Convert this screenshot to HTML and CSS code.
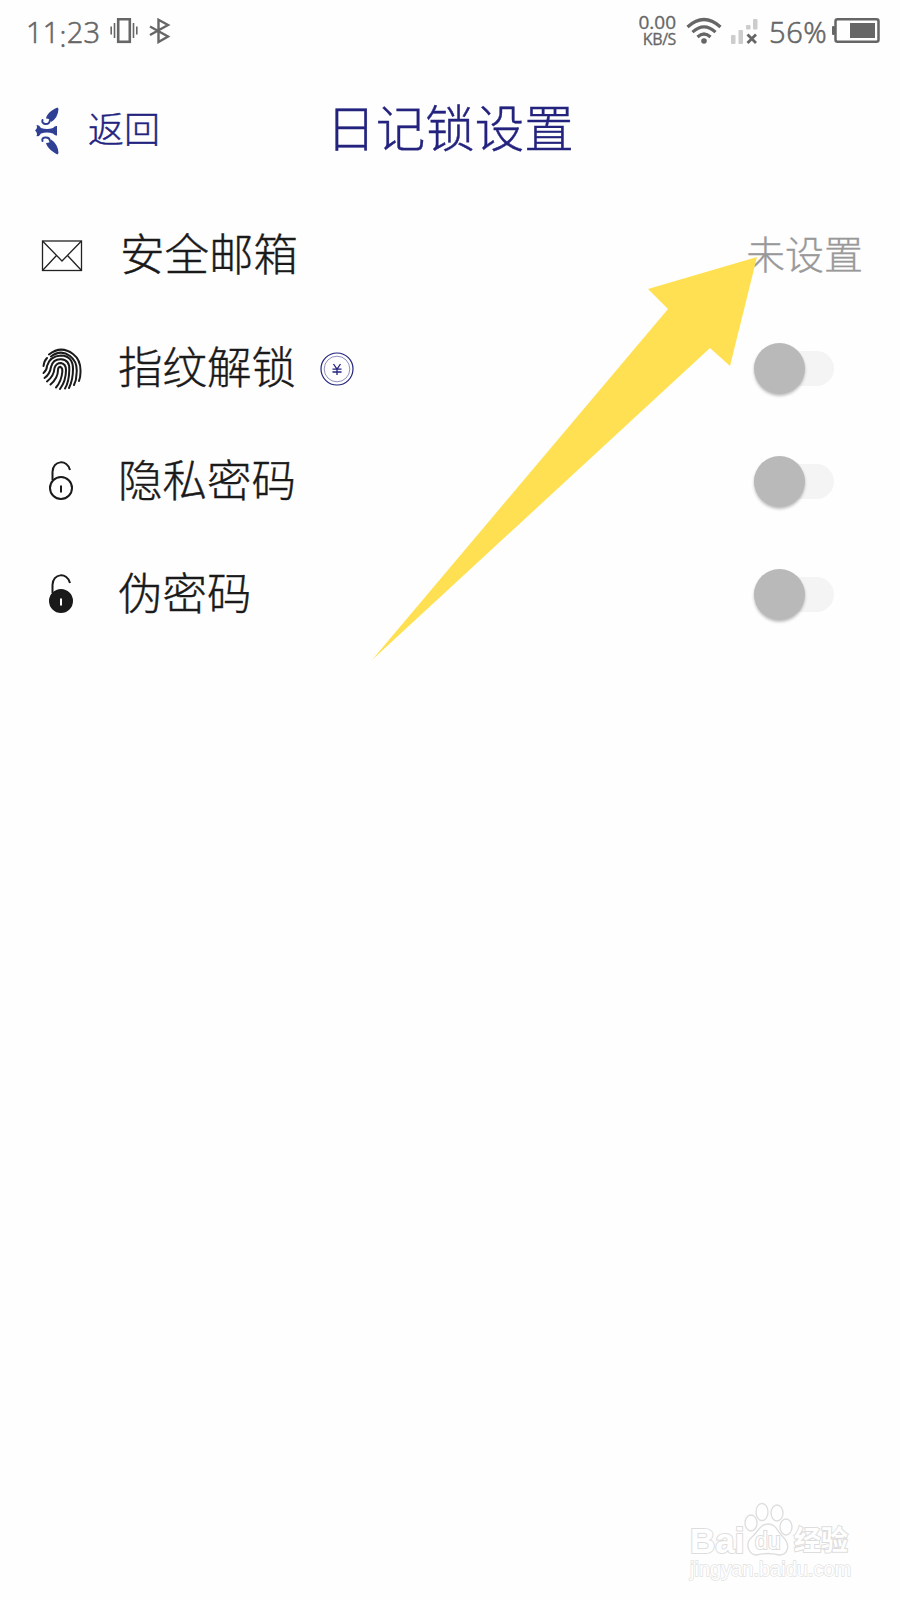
FILE: index.html
```html
<!DOCTYPE html>
<html lang="zh-CN">
<head>
    <meta charset="UTF-8">
    <meta name="viewport" content="width=device-width, initial-scale=1.0">
    <title>日记锁设置</title>
    <link rel="stylesheet" href="styles.css">
</head>
<body>
    <!-- Status bar -->
    <div class="statusbar">
        <div class="status-left">
            <span class="time">11<i class="colon">:</i>23</span>
            <svg class="vibrate" width="28" height="26" viewBox="0 0 28 26" fill="none" stroke="#666">
                <rect x="8.2" y="1.2" width="11.6" height="22.6" stroke-width="2.6"/>
                <path d="M4.5 5v15M1.2 8.5v8M23.5 5v15M26.8 8.5v8" stroke-width="1.6"/>
            </svg>
            <svg class="bluetooth" width="22" height="26" viewBox="0 0 22 26" fill="none" stroke="#666" stroke-width="2.4">
                <path d="M1 8.5L19 18.5L9.5 24V1.8L19 7L1 17"/>
            </svg>
        </div>
        <div class="status-right">
            <div class="speed"><span class="rate">0.00</span><span class="unit">KB/S</span></div>
            <svg class="wifi" width="36" height="28" viewBox="0 0 36 28" fill="none" stroke="#666" stroke-width="3.2">
                <path d="M1.5 10Q18 -5 34.5 10M6.5 15.2Q18 4.5 29.5 15.2M11.5 20Q18 14 24.5 20"/>
                <circle cx="18" cy="24" r="2.8" fill="#666" stroke="none"/>
            </svg>
            <svg class="signal" width="28" height="27" viewBox="0 0 28 27">
                <g fill="#ccc">
                    <rect x="0" y="17" width="4.5" height="9" rx="1"/>
                    <rect x="7.5" y="12" width="4.5" height="14" rx="1"/>
                    <rect x="15" y="7" width="4.5" height="4.5" rx="1"/>
                    <rect x="22" y="1" width="4.5" height="10.5" rx="1"/>
                </g>
                <path d="M16.5 16.5l8.5 8.5M25 16.5l-8.5 8.5" stroke="#666" stroke-width="2.8"/>
            </svg>
            <span class="percent">56%</span>
            <svg class="battery" width="48" height="26" viewBox="0 0 48 26">
                <rect x="0" y="8" width="3" height="9" rx="1" fill="#666"/>
                <rect x="3.5" y="1.3" width="43" height="22.5" rx="2" fill="none" stroke="#666" stroke-width="2.5"/>
                <rect x="18" y="5" width="25" height="15" fill="#666"/>
            </svg>
        </div>
    </div>

    <!-- Header -->
    <div class="header">
        <div class="back">
            <svg class="back-icon" width="24" height="50" viewBox="0 0 24 50">
                <g fill="#2e3f94">
                    <path d="M22.5 1.5C16 4 12 8 11 12.5Q15.500 12.500 16 16Q23 12 23.5 3Z"/>
                    <path d="M22.5 48.5C16 45 12 41 11 37Q15.500 37 16 33.500Q23 38 23.5 47Z"/>
                    <path d="M1.5 19Q4 18.500 6 22Q12 24 18 22Q20 19.500 22 20V29.500Q20 30 18 27.500Q12 25.500 6 27.500Q4 31 1.5 30Q3 27 0 24.5Q3 22 1.5 19Z"/>
                </g>
                <path d="M15 14Q14.500 18.500 10 18Q6.500 17 7.500 14M15 35Q14.500 31 10 31.500Q6.500 32 7.500 35" fill="none" stroke="#2e3f94" stroke-width="2" stroke-linecap="round"/>
            </svg>
            <span class="back-text">返回</span>
        </div>
        <h1 class="title">日记锁设置</h1>
    </div>

    <!-- Settings list -->
    <div class="list">
        <div class="row">
            <div class="icon">
                <svg width="42" height="32" viewBox="0 0 42 32" fill="none" stroke="#222" stroke-width="1.3">
                    <rect x="1.5" y="1" width="39" height="29.5"/>
                    <path d="M1.5 1L21 21L40.5 1M1.5 30.5L15.5 15.5M40.5 30.5L26.5 15.5"/>
                </svg>
            </div>
            <span class="label label-mail">安全邮箱</span>
            <span class="value">未设置</span>
        </div>
        <div class="row">
            <div class="icon">
                <svg width="40" height="42" viewBox="0 0 40 42" fill="none" stroke="#1a1a1a" stroke-width="2" stroke-linecap="round">
                    <path d="M7 6.5Q19-3 31 6Q39 12 38.5 24Q38.5 29 37 33"/>
                    <path d="M1.5 18Q2 13 5 10M9 8.5Q19 1 28 8Q36 14 34.5 26Q34.5 32 32 37"/>
                    <path d="M1.5 25Q5 22 5 18Q8 8 19 7.5Q31 8 31 21Q31 32 27 40"/>
                    <path d="M2.5 30Q8 26 9 19Q11 11 19 11.3Q28 12 27.3 22Q27 34 23 40.5"/>
                    <path d="M5 33.5Q12 28 12.5 20Q14 15 19 15Q24 16 24 22Q24 33 18 41"/>
                    <path d="M8.5 36.5Q16 30 16 22Q16 19 18.5 18.8Q20.8 20 20.3 24Q19.5 33 14 39.5"/>
                </svg>
            </div>
            <span class="label">指纹解锁</span>
            <svg class="coin" width="34" height="34" viewBox="0 0 34 34" fill="none" stroke="#23237f">
                <circle cx="17" cy="17" r="16" stroke-width="1.2"/>
                <circle cx="17" cy="17" r="12.8" stroke-width=".5"/>
                <path d="M13.5 12l3.5 5l3.5-5M17 17v6M12.5 17.2h9M12.5 20h9" stroke-width="1.3"/>
            </svg>
            <div class="switch"><div class="knob"></div></div>
        </div>
        <div class="row">
            <div class="icon">
                <svg class="lock" width="26" height="40" viewBox="0 0 26 40" fill="none" stroke="#1a1a1a" stroke-width="2">
                    <path d="M4.5 19V11C4.5-1 19.5-2 22 9"/>
                    <circle cx="13" cy="27" r="11"/>
                    <path d="M13 24.5v7"/>
                </svg>
            </div>
            <span class="label">隐私密码</span>
            <div class="switch"><div class="knob"></div></div>
        </div>
        <div class="row">
            <div class="icon">
                <svg class="lock" width="26" height="40" viewBox="0 0 26 40" fill="none" stroke="#1a1a1a" stroke-width="2">
                    <path d="M4.5 19V11C4.5-1 19.5-2 22 9"/>
                    <circle cx="13" cy="27" r="11" fill="#1a1a1a"/>
                    <path d="M13 24.5v7" stroke="#fff"/>
                </svg>
            </div>
            <span class="label">伪密码</span>
            <div class="switch"><div class="knob"></div></div>
        </div>
    </div>

    <!-- Arrow pointing at the mailbox value -->
    <svg class="arrow" width="386" height="404" viewBox="0 0 386 404">
        <path d="M385 1L276 33L296 53L0 404L338 92L358 110Z" fill="#ffe052"/>
    </svg>

    <!-- Watermark -->
    <div class="watermark">
        <div class="brand">
            <span class="bai">Bai</span>
            <div class="paw">
                <svg width="50" height="54" viewBox="0 0 50 54" fill="#fff" stroke="#ddd" stroke-width="1.3">
                    <ellipse cx="7" cy="21" rx="6" ry="8"/>
                    <ellipse cx="18" cy="10" rx="6" ry="8.5"/>
                    <ellipse cx="33" cy="11" rx="6" ry="8"/>
                    <ellipse cx="42" cy="25" rx="6" ry="8"/>
                    <path d="M24 22C16 22 14 30 8 35C0 42 5 53 13 53Q24 50 35 53C44 53 47 43 39 35C33 29 32 22 24 22Z"/>
                </svg>
                <span class="du">du</span>
            </div>
            <span class="jingyan">经验</span>
        </div>
        <div class="site">jingyan.baidu.com</div>
    </div>
</body>
</html>
```
FILE: styles.css
```css
* {
    box-sizing: border-box;
}

body {
    margin: 0;
    height: 1600px;
    position: relative;
    overflow: hidden;
    background-color: #fefefe;
    font-family: "Noto Sans CJK SC", sans-serif;
    font-weight: 300;
    color: #1a1a1a;
}

svg {
    display: block;
    flex-shrink: 0;
}

/* Status bar */
.statusbar {
    display: flex;
    justify-content: space-between;
    height: 62px;
    padding: 0 20px 0 26px;
    font-family: "Open Sans", "Noto Sans", sans-serif;
    font-weight: 400;
    color: #666;
}

.status-left,
.status-right {
    display: flex;
    align-items: center;
}

.time {
    width: 84px;
    padding-top: 1px;
    font-size: 29px;
    font-weight: 300;
    letter-spacing: 0.2px;
    white-space: nowrap;
    -webkit-text-stroke: 0.6px #666;
}

.colon {
    position: relative;
    top: 4px;
    font-style: normal;
}

.bluetooth {
    margin-left: 11px;
}

.speed {
    display: flex;
    flex-direction: column;
    align-items: flex-end;
    font-size: 19px;
    line-height: 17px;
    -webkit-text-stroke: 0.3px #666;
}

.unit {
    font-size: 16px;
    letter-spacing: -0.4px;
}

.wifi {
    margin-left: 10px;
}

.signal {
    margin-left: 9px;
}

.percent {
    width: 63px;
    margin-left: 10px;
    padding-top: 1px;
    font-size: 29px;
    font-weight: 300;
    letter-spacing: 0.6px;
    white-space: nowrap;
    -webkit-text-stroke: 0.6px #666;
}

/* Header */
.header {
    display: grid;
    grid-template-columns: 1fr auto 1fr;
    align-items: center;
    height: 137px;
    padding: 0 35px;
    color: #23237f;
}

.back {
    display: flex;
    align-items: center;
}

.back-text {
    margin-left: 29px;
    padding-bottom: 8px;
    font-size: 36px;
    line-height: 50px;
    -webkit-text-stroke: 0.4px #23237f;
}

.title {
    margin: 0;
    padding-bottom: 9px;
    font-size: 49.5px;
    font-weight: 300;
    line-height: 60px;
    -webkit-text-stroke: 0.4px #23237f;
}

/* Settings list */
.row {
    display: flex;
    align-items: center;
    height: 113px;
    padding: 0 37px 0 38px;
}

.icon {
    display: flex;
    justify-content: center;
    width: 48px;
}

.lock {
    margin: -2px 2px 0 0;
}

.label {
    margin-left: 32px;
    padding-bottom: 7px;
    font-size: 44.5px;
    line-height: 60px;
    -webkit-text-stroke: 0.4px #1a1a1a;
}

.label-mail {
    margin-left: 34px;
}

.value {
    margin-left: auto;
    padding-bottom: 7px;
    font-size: 39px;
    color: #999;
    -webkit-text-stroke: 0.3px #999;
}

.coin {
    margin-left: 24px;
}

.switch {
    display: flex;
    align-items: center;
    width: 80px;
    height: 35px;
    margin: 0 29px 0 auto;
    border-radius: 18px;
    background-color: #f4f4f4;
}

.knob {
    width: 51px;
    height: 51px;
    border-radius: 50%;
    background-color: #b9b9b9;
    box-shadow: 0 2px 3px rgba(0, 0, 0, 0.25);
}

.arrow {
    position: absolute;
    left: 372px;
    top: 256px;
}

/* Watermark */
.watermark {
    position: absolute;
    left: 690px;
    top: 1502px;
    width: 165px;
    font-family: "Liberation Sans", "Noto Sans CJK SC", sans-serif;
    color: #fff;
    -webkit-text-stroke: 2px #ddd;
    paint-order: stroke fill;
}

.brand {
    display: flex;
    align-items: flex-end;
    height: 54px;
}

.bai {
    width: 54px;
    font-size: 35px;
    font-weight: bold;
    line-height: 31px;
}

.paw {
    display: grid;
    width: 50px;
}

.paw svg,
.du {
    grid-area: 1 / 1;
}

.paw svg {
    paint-order: normal;
}

.du {
    align-self: end;
    padding: 0 0 3px 11px;
    font-size: 23px;
    line-height: 23px;
}

.jingyan {
    font-size: 27px;
    font-weight: bold;
    line-height: 29px;
}

.site {
    font-size: 20px;
    line-height: 26px;
    -webkit-text-stroke: 1.4px #e2e2e2;
}
```
